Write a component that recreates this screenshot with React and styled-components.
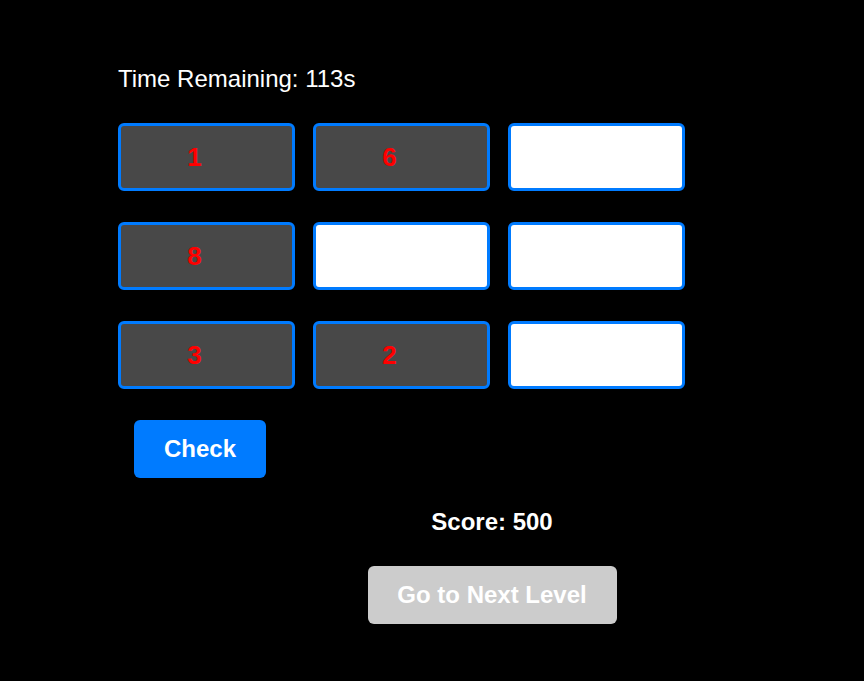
import React, { useState } from 'react';
import styled, { createGlobalStyle } from 'styled-components';

const GlobalStyle = createGlobalStyle`
html, body {
    margin: 0;
    padding: 0;
    background: #000;
    font-family: "Liberation Sans", Arial, sans-serif;
}
`;

const Page = styled.div`
min-height: 681px;
box-sizing: border-box;
padding: 65px 0 0 118px;
display: flex;
flex-direction: column;
gap: 30px;
color: #fff;
`;

const Timer = styled.div`
font-size: 24px;
line-height: 28px;
`;

const Board = styled.div`
display: grid;
grid-template-columns: repeat(3, 177px);
column-gap: 18px;
row-gap: 31px;
`;

const Cell = styled.input`
box-sizing: border-box;
width: 177px;
height: 68px;
border: 3px solid #007bff;
border-radius: 6px;
padding: 0 24px 0 0;
margin: 0;
text-align: center;
font-family: "Liberation Sans", Arial, sans-serif;
font-size: 26px;
font-weight: bold;
color: #ff0000;
background: ${(props) => (props.filled ? '#484848' : '#fff')};
outline: none;
`;

const Button = styled.button`
box-sizing: border-box;
height: 58px;
border: none;
border-radius: 6px;
font-family: "Liberation Sans", Arial, sans-serif;
font-size: 24px;
font-weight: bold;
color: #fff;
background: ${(props) => (props.disabled ? '#cccccc' : '#007bff')};
cursor: ${(props) => (props.disabled ? 'default' : 'pointer')};
`;

const CheckButton = styled(Button)`
width: 132px;
margin: 1px 0 0 16px;
align-self: flex-start;
`;

const Footer = styled.div`
display: flex;
flex-direction: column;
align-items: center;
gap: 30px;
padding-left: 2px;
`;

const Score = styled.div`
font-size: 24px;
font-weight: bold;
line-height: 28px;
`;

const NextButton = styled(Button)`
width: 249px;
`;

const initial = ['1', '6', '', '8', '', '', '3', '2', ''];

const App = () => {
    const [cells, setCells] = useState(initial);

    const handleChange = (i, value) => {
        const next = [...cells];
        next[i] = value;
        setCells(next);
    };

    return (
        <>
            <GlobalStyle />
            <Page>
                <Timer>Time Remaining: 113s</Timer>
                <Board>
                    {cells.map((value, i) => (
                        <Cell
                            key={i}
                            filled={initial[i] !== ''}
                            readOnly={initial[i] !== ''}
                            value={value}
                            onChange={(e) => handleChange(i, e.target.value)}
                        />
                    ))}
                </Board>
                <CheckButton>Check</CheckButton>
                <Footer>
                    <Score>Score: 500</Score>
                    <NextButton disabled>Go to Next Level</NextButton>
                </Footer>
            </Page>
        </>
    );
};

export default App;
